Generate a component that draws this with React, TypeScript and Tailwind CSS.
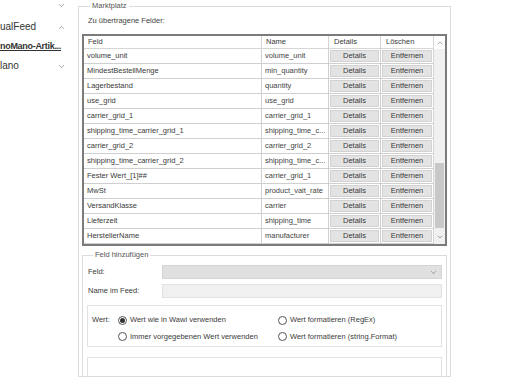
import { ChevronDown, ChevronUp } from "lucide-react";

const rows: [string, string][] = [
  ["volume_unit", "volume_unit"],
  ["MindestBestellMenge", "min_quantity"],
  ["Lagerbestand", "quantity"],
  ["use_grid", "use_grid"],
  ["carrier_grid_1", "carrier_grid_1"],
  ["shipping_time_carrier_grid_1", "shipping_time_c..."],
  ["carrier_grid_2", "carrier_grid_2"],
  ["shipping_time_carrier_grid_2", "shipping_time_c..."],
  ["Fester Wert_[1]##", "carrier_grid_1"],
  ["MwSt", "product_vait_rate"],
  ["VersandKlasse", "carrier"],
  ["Lieferzeit", "shipping_time"],
  ["HerstellerName", "manufacturer"],
];

function Radio({ checked, label }: { checked?: boolean; label: string }) {
  return (
    <div className="flex items-center h-[14px] gap-[3px]">
      <span className="w-[9px] h-[9px] rounded-full border border-[#555] flex items-center justify-center bg-white">
        {checked && <span className="w-[5px] h-[5px] rounded-full bg-[#333]" />}
      </span>
      <span>{label}</span>
    </div>
  );
}

export default function App() {
  return (
    <div className="w-[505px] h-[377px] overflow-hidden bg-white flex font-['Liberation_Sans',Arial,sans-serif] text-[7.5px] leading-[10px] text-[#3a3a3a]">
      {/* sidebar tree */}
      <div className="w-[78px] shrink-0 text-[10px] leading-[10px] text-[#333]">
        <div className="h-[11px] flex items-center justify-end pr-[12px]">
          <ChevronDown size={9} strokeWidth={1.5} color="#666" />
        </div>
        <div className="mt-[11px] h-[10px] flex items-center justify-between pr-[12px]">
          <span className="whitespace-nowrap">ualFeed</span>
          <ChevronUp size={9} strokeWidth={1.5} color="#666" />
        </div>
        <div className="mt-[9px] h-[10px] flex items-center">
          <span className="text-[9px] tracking-[-0.3px] font-bold underline whitespace-nowrap">noMano-Artik...</span>
        </div>
        <div className="mt-[10px] h-[10px] flex items-center justify-between pr-[12px]">
          <span className="whitespace-nowrap">lano</span>
          <ChevronDown size={9} strokeWidth={1.5} color="#666" />
        </div>
      </div>

      {/* Marktplatz */}
      <fieldset className="w-[373px] shrink-0 mt-px border border-[#dcdcdc] px-[3px] min-w-0">
        <legend className="ml-[8px] px-[2px] text-[#555]">Marktplatz</legend>
        <div className="mt-[4px] h-[12px] leading-[12px] pl-[6px] text-[#444]">Zu übertragene Felder:</div>

        {/* table */}
        <div className="mt-[7px] h-[212px] border-2 border-[#7b7b7b] flex">
          <div className="w-[349px] grid grid-cols-[178px_67px_52px_52px] grid-rows-[13px_repeat(13,15px)]">
            <div className="pl-[4px] border-r border-b border-[#d6d6d6] flex items-center">Feld</div>
            <div className="pl-[4px] border-r border-b border-[#d6d6d6] flex items-center">Name</div>
            <div className="pl-[5px] border-r border-b border-[#d6d6d6] flex items-center">Details</div>
            <div className="pl-[5px] border-b border-[#d6d6d6] flex items-center">Löschen</div>
            {rows.map(([feld, name]) => (
              <div key={feld} className="contents">
                <div className="pl-[3px] border-r border-b border-[#cfcfcf] flex items-center whitespace-nowrap overflow-hidden">
                  {feld}
                </div>
                <div className="pl-[3px] border-r border-b border-[#cfcfcf] flex items-center whitespace-nowrap overflow-hidden text-[#444]">
                  {name}
                </div>
                <div className="p-px border-r border-b border-[#cfcfcf]">
                  <div className="h-full bg-[#e3e3e3] border border-[#d2d2d2] flex items-center justify-center">Details</div>
                </div>
                <div className="p-px border-b border-[#cfcfcf]">
                  <div className="h-full bg-[#e3e3e3] border border-[#d2d2d2] flex items-center justify-center">Entfernen</div>
                </div>
              </div>
            ))}
          </div>
          {/* scrollbar */}
          <div className="w-[12px] flex flex-col bg-[#f0f0f0] border-l border-[#d6d6d6]">
            <div className="h-[13px] flex items-center justify-center bg-white">
              <ChevronUp size={8} strokeWidth={1.5} color="#555" />
            </div>
            <div className="h-[114px]" />
            <div className="h-[65px] mx-px bg-[#c8c8c8]" />
            <div className="flex-1 flex items-end justify-center pb-[3px]">
              <ChevronDown size={8} strokeWidth={1.5} color="#555" />
            </div>
          </div>
        </div>

        {/* Feld hinzufügen */}
        <fieldset className="mt-[4px] border border-[#dcdcdc] px-[4px] min-w-0">
          <legend className="ml-[6px] px-[2px] text-[#555]">Feld hinzufügen</legend>
          <div className="mt-[5px] h-[14px] flex items-center">
            <span className="w-[75px] shrink-0 pl-px">Feld:</span>
            <div className="flex-1 h-full bg-[#e0e0e0] border border-[#d4d4d4] flex items-center justify-end pr-[3px]">
              <ChevronDown size={9} strokeWidth={1.5} color="#666" />
            </div>
          </div>
          <div className="mt-[5px] h-[14px] flex items-center">
            <span className="w-[75px] shrink-0 pl-px">Name im Feed:</span>
            <div className="flex-1 h-full bg-[#f0f0f0] border border-[#e2e2e2]" />
          </div>

          <div className="mt-[7px] h-[42px] border border-[#e2e2e2] flex pt-[7px] pl-[4px]">
            <div className="w-[26px] h-[14px] flex items-center">Wert:</div>
            <div className="grid grid-cols-[160px_1fr]">
              <Radio checked label="Wert wie in Wawi verwenden" />
              <Radio label="Wert formatieren (RegEx)" />
              <Radio label="Immer vorgegebenen Wert verwenden" />
              <Radio label="Wert formatieren (string.Format)" />
            </div>
          </div>

          <div className="mt-[10px] h-[40px] border border-[#e2e2e2]" />
        </fieldset>
      </fieldset>
    </div>
  );
}
